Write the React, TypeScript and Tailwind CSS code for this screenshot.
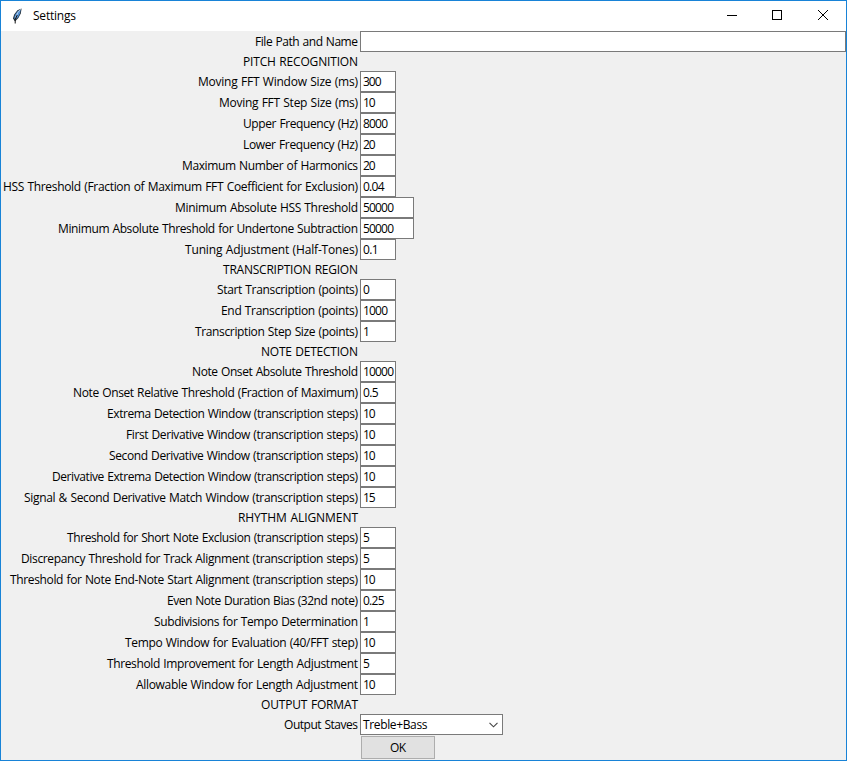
import { useLayoutEffect, useRef } from "react";

type Row = {
  label: string;
  width: number;
  value?: string;
  valueWidth?: number;
  wide?: boolean;
};

const rows: Row[] = [
  { label: "PITCH RECOGNITION", width: 115 },
  { label: "Moving FFT Window Size (ms)", width: 160, value: "300", valueWidth: 18.5 },
  { label: "Moving FFT Step Size (ms)", width: 139, value: "10", valueWidth: 12.5 },
  { label: "Upper Frequency (Hz)", width: 115, value: "8000", valueWidth: 25 },
  { label: "Lower Frequency (Hz)", width: 115, value: "20", valueWidth: 12.5 },
  { label: "Maximum Number of Harmonics", width: 176, value: "20", valueWidth: 12.5 },
  { label: "HSS Threshold (Fraction of Maximum FFT Coefficient for Exclusion)", width: 355, value: "0.04", valueWidth: 21.5 },
  { label: "Minimum Absolute HSS Threshold", width: 183, value: "50000", valueWidth: 31, wide: true },
  { label: "Minimum Absolute Threshold for Undertone Subtraction", width: 300, value: "50000", valueWidth: 31, wide: true },
  { label: "Tuning Adjustment (Half-Tones)", width: 173, value: "0.1", valueWidth: 15.5 },
  { label: "TRANSCRIPTION REGION", width: 135 },
  { label: "Start Transcription (points)", width: 141, value: "0", valueWidth: 6 },
  { label: "End Transcription (points)", width: 137, value: "1000", valueWidth: 25 },
  { label: "Transcription Step Size (points)", width: 163, value: "1", valueWidth: 6 },
  { label: "NOTE DETECTION", width: 97 },
  { label: "Note Onset Absolute Threshold", width: 166, value: "10000", valueWidth: 31 },
  { label: "Note Onset Relative Threshold (Fraction of Maximum)", width: 285, value: "0.5", valueWidth: 15.5 },
  { label: "Extrema Detection Window (transcription steps)", width: 251, value: "10", valueWidth: 12.5 },
  { label: "First Derivative Window (transcription steps)", width: 232, value: "10", valueWidth: 12.5 },
  { label: "Second Derivative Window (transcription steps)", width: 249, value: "10", valueWidth: 12.5 },
  { label: "Derivative Extrema Detection Window (transcription steps)", width: 306, value: "10", valueWidth: 12.5 },
  { label: "Signal & Second Derivative Match Window (transcription steps)", width: 334, value: "15", valueWidth: 12.5 },
  { label: "RHYTHM ALIGNMENT", width: 120 },
  { label: "Threshold for Short Note Exclusion (transcription steps)", width: 291, value: "5", valueWidth: 6 },
  { label: "Discrepancy Threshold for Track Alignment (transcription steps)", width: 337, value: "5", valueWidth: 6 },
  { label: "Threshold for Note End-Note Start Alignment (transcription steps)", width: 348, value: "10", valueWidth: 12.5 },
  { label: "Even Note Duration Bias (32nd note)", width: 191, value: "0.25", valueWidth: 21.5 },
  { label: "Subdivisions for Tempo Determination", width: 204, value: "1", valueWidth: 6 },
  { label: "Tempo Window for Evaluation (40/FFT step)", width: 233, value: "10", valueWidth: 12.5 },
  { label: "Threshold Improvement for Length Adjustment", width: 251, value: "5", valueWidth: 6 },
  { label: "Allowable Window for Length Adjustment", width: 222, value: "10", valueWidth: 12.5 },
  { label: "OUTPUT FORMAT", width: 97 },
];

// Tracks the text so that it takes up the given width.
function Fit({ text, width }: { text: string; width: number }) {
  const ref = useRef<HTMLSpanElement>(null);
  useLayoutEffect(() => {
    const el = ref.current;
    if (!el || text.length < 2) return;
    el.style.letterSpacing = "0px";
    const spacing = (width - el.getBoundingClientRect().width) / (text.length - 1);
    el.style.letterSpacing = `${spacing}px`;
    el.style.marginRight = `${-spacing}px`;
  }, [text, width]);
  return (
    <span ref={ref} className="inline-block shrink-0 whitespace-pre [word-spacing:0.6px]">
      {text}
    </span>
  );
}

function Label({ text, width }: { text: string; width: number }) {
  return (
    <div className="flex w-[359px] shrink-0 items-center justify-end pr-[2px]">
      <Fit text={text} width={width} />
    </div>
  );
}

function Feather() {
  return (
    <svg className="ml-[10px] h-4 w-4" viewBox="0 0 16 16" fill="none">
      <path d="M10.6.4 6.4 2.2 3.2 6.5 2 10.2l1.2 2.3 1 .7L7.4 10l2.4-4.4Z" fill="#26323d" />
      <path d="M9.6 1.5 6.8 3 4 7 3.2 10.3l1 1.2L7 9.2l2-4Z" fill="#4f8fd6" />
      <path d="M9.7 1.3 6.8 4.6 4.7 9.4" stroke="#c3d6e8" strokeWidth=".9" />
      <path d="M6.2 7 4.2 11.5v4" stroke="#111" strokeWidth="1" />
    </svg>
  );
}

export default function App() {
  return (
    <div className="flex h-[761px] w-[847px] flex-col overflow-hidden border border-[#1883d7] bg-[#f0f0f0] font-['Open_Sans','Noto_Sans',sans-serif] text-[12px] leading-[17px] text-black">
      <header className="flex h-[30px] shrink-0 items-center bg-white">
        <Feather />
        <div className="mb-px ml-[6px] flex flex-1">
          <Fit text="Settings" width={43} />
        </div>
        <svg className="h-[30px] w-[138px]" viewBox="0 0 138 30" fill="none" stroke="#000" shapeRendering="crispEdges">
          <path d="M19 14.5h10" />
          <rect x="64.5" y="9.5" width="9" height="9" />
          <path d="m110 9 10 10m0-10-10 10" shapeRendering="auto" strokeWidth="1" />
        </svg>
      </header>

      <main className="flex flex-col">
        <div className="flex h-[21px]">
          <Label text="File Path and Name" width={103} />
          <div className="flex-1 border border-[#7a7a7a] bg-white" />
        </div>
        {rows.map((row) => (
          <div key={row.label} className={row.value ? "flex h-[21px]" : "flex h-[19px]"}>
            <Label text={row.label} width={row.width} />
            {row.value && (
              <div
                className={`flex items-center border border-[#7a7a7a] bg-white pl-[2px] ${row.wide ? "w-[54px]" : "w-[36px]"}`}
              >
                <Fit text={row.value} width={row.valueWidth ?? 0} />
              </div>
            )}
          </div>
        ))}
        <div className="flex h-[21px]">
          <Label text="Output Staves" width={74} />
          <div className="flex w-[143px] items-center justify-between border border-[#7a7a7a] bg-white pr-[4px] pl-[2px]">
            <Fit text="Treble+Bass" width={64.5} />
            <svg className="h-[6px] w-[9px]" viewBox="0 0 9 6" fill="none" stroke="#444" strokeWidth="1.1">
              <path d="m.5.8 4 4 4-4" />
            </svg>
          </div>
        </div>
        <button className="mt-px ml-[360px] flex h-[23px] w-[74px] items-center justify-center border border-[#adadad] bg-[#e1e1e1]">
          <Fit text="OK" width={16} />
        </button>
      </main>
    </div>
  );
}
